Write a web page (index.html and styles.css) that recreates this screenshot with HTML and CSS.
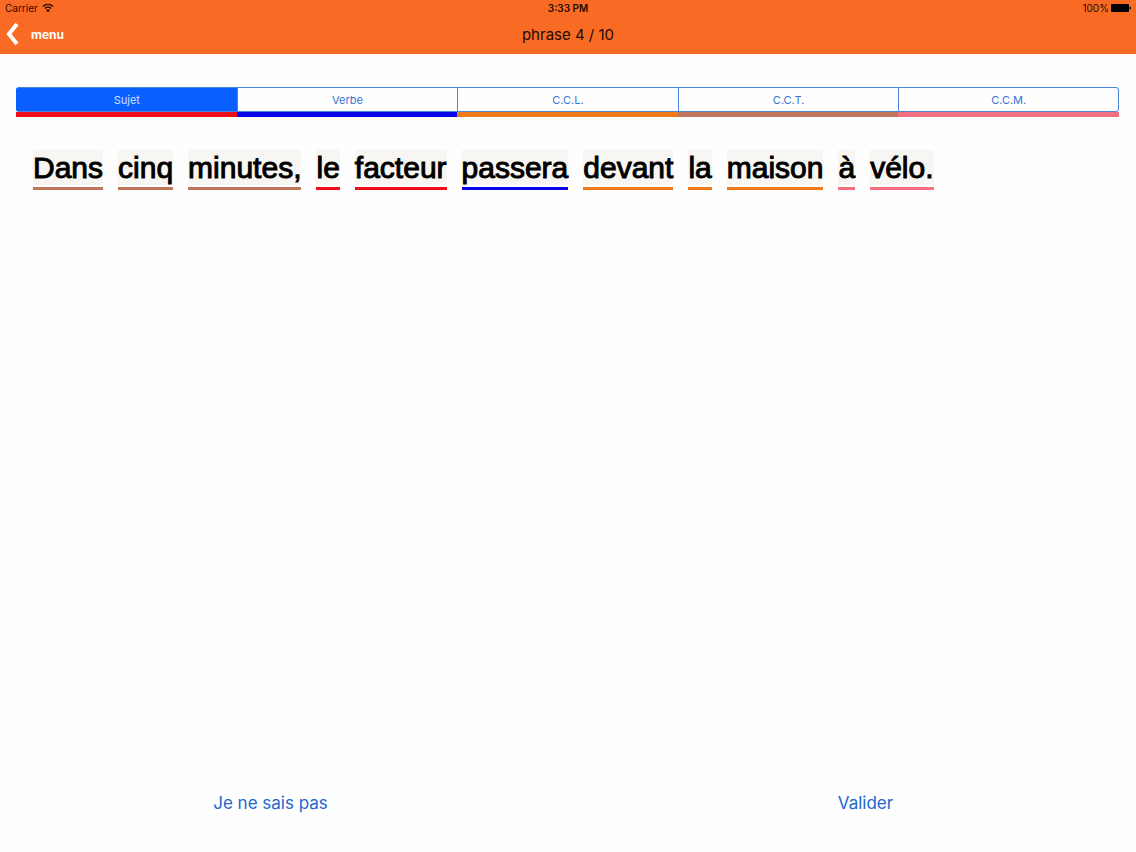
FILE: index.html
```
<!DOCTYPE html>
<html lang="fr">

<head>
    <meta charset="UTF-8">
    <meta name="viewport" content="width=device-width, initial-scale=1">
    <title>phrase 4 / 10</title>
    <link rel="stylesheet" href="styles.css">
</head>

<body>
    <header class="top-bar">
        <div class="status">
            <div class="status-left">
                <span>Carrier</span>
                <svg class="wifi" viewBox="0 0 20 16" aria-hidden="true">
                    <path d="M1.5 5.5a12 12 0 0 1 17 0M4.800 9a7.5 7.5 0 0 1 10.4 0" fill="none" stroke="currentColor" stroke-width="2.4"/>
                    <path d="M6.8 11.6a4.5 4.5 0 0 1 6.4 0L10 15z" fill="currentColor"/>
                </svg>
            </div>
            <div class="status-time">3:33 PM</div>
            <div class="status-right">
                <span>100%</span>
                <svg class="battery" viewBox="0 0 20 8" aria-hidden="true">
                    <rect width="18" height="8" rx="1" fill="currentColor"/>
                    <path d="M18.5 2.5a1.5 1.5 0 0 1 0 3z" fill="currentColor"/>
                </svg>
            </div>
        </div>
        <nav class="nav">
            <a href="#menu" class="back">
                <svg class="chevron" viewBox="0 0 14 24" aria-hidden="true">
                    <path d="M11 2L3 12l8 10" fill="none" stroke="currentColor" stroke-width="4"/>
                </svg>
                menu
            </a>
            <h1 class="title">phrase 4 / 10</h1>
        </nav>
    </header>

    <main class="content">
        <div class="tabs">
            <div class="tab-cell sujet"><button type="button" class="tab active" aria-pressed="true">Sujet</button></div>
            <div class="tab-cell verbe"><button type="button" class="tab" aria-pressed="false">Verbe</button></div>
            <div class="tab-cell ccl"><button type="button" class="tab" aria-pressed="false">C.C.L.</button></div>
            <div class="tab-cell cct"><button type="button" class="tab" aria-pressed="false">C.C.T.</button></div>
            <div class="tab-cell ccm"><button type="button" class="tab" aria-pressed="false">C.C.M.</button></div>
        </div>

        <div class="phrase">
            <button type="button" class="word cct"><span>Dans</span></button>
            <button type="button" class="word cct"><span>cinq</span></button>
            <button type="button" class="word cct"><span>minutes,</span></button>
            <button type="button" class="word sujet"><span>le</span></button>
            <button type="button" class="word sujet"><span>facteur</span></button>
            <button type="button" class="word verbe"><span>passera</span></button>
            <button type="button" class="word ccl"><span>devant</span></button>
            <button type="button" class="word ccl"><span>la</span></button>
            <button type="button" class="word ccl"><span>maison</span></button>
            <button type="button" class="word ccm"><span>à</span></button>
            <button type="button" class="word ccm"><span>vélo.</span></button>
        </div>
    </main>

    <footer class="actions">
        <button type="button" class="action">Je ne sais pas</button>
        <button type="button" class="action">Valider</button>
    </footer>

    <script>
        var tabs = document.querySelectorAll('.tab');
        tabs.forEach(function(tab) {
            tab.addEventListener('click', function() {
                tabs.forEach(function(other) {
                    other.classList.toggle('active', other === tab);
                    other.setAttribute('aria-pressed', other === tab);
                });
            });
        });
    </script>
</body>

</html>
```
FILE: styles.css
```
* {
    box-sizing: border-box;
}

body {
    margin: 0;
    min-height: 100vh;
    display: flex;
    flex-direction: column;
    background-color: #fefefe;
    font-family: Inter, "Liberation Sans", sans-serif;
}

button {
    margin: 0;
    padding: 0;
    border: none;
    background: none;
    font-family: inherit;
    cursor: pointer;
}

/* one colour for each function in the sentence */
.sujet {
    --color: #f10c1c;
}

.verbe {
    --color: #0a06ea;
}

.ccl {
    --color: #ef7a1a;
}

.cct {
    --color: #c0745a;
}

.ccm {
    --color: #f2707f;
}

.top-bar {
    background-color: #f96a25;
    color: #240a02;
}

.status {
    display: grid;
    grid-template-columns: 1fr auto 1fr;
    align-items: center;
    height: 16px;
    padding: 0 5px;
    font-size: 10px;
}

.status-left,
.status-right {
    display: flex;
    align-items: center;
    gap: 4px;
}

.status-right {
    justify-content: flex-end;
    gap: 2px;
}

.status-time {
    font-weight: 600;
}

.wifi {
    width: 12px;
    height: 10px;
}

.battery {
    width: 20px;
    height: 8px;
    color: #000;
}

.nav {
    display: grid;
    grid-template-columns: 1fr auto 1fr;
    align-items: center;
    height: 38px;
    padding: 0 6px 2px;
}

.back {
    display: flex;
    align-items: center;
    gap: 11px;
    color: #fff;
    font-size: 12px;
    font-weight: 700;
    text-decoration: none;
}

.chevron {
    width: 14px;
    height: 24px;
}

.title {
    margin: 0;
    font-size: 15px;
    font-weight: 400;
}

.content {
    flex: 1;
    padding: 33px 17px 0 16px;
}

.tabs {
    display: flex;
}

.tab-cell {
    flex: 1;
    border-bottom: 5px solid var(--color);
}

.tab {
    display: block;
    width: 100%;
    height: 25px;
    border: 1px solid #4a83dc;
    border-right: none;
    color: #3673d3;
    font-size: 11px;
}

.tab-cell:first-child .tab {
    border-radius: 3px 0 0 3px;
}

.tab-cell:last-child .tab {
    border-right: 1px solid #4a83dc;
    border-radius: 0 3px 3px 0;
}

.tab.active {
    background-color: #0a5fff;
    border-left-color: #0a5fff;
    color: #cfe0ff;
}

.phrase {
    display: flex;
    flex-wrap: wrap;
    gap: 15px;
    padding: 33px 17px 0;
}

.word {
    padding-bottom: 2px;
    border-bottom: 3px solid var(--color);
    color: #000;
    font-family: "Liberation Sans", Arial, sans-serif;
    font-size: 30px;
    line-height: 35px;
    -webkit-text-stroke: 1px #000;
}

.word span {
    display: block;
    background-color: #f7f6f2;
}

.actions {
    display: grid;
    grid-template-columns: 1fr 1fr;
    gap: 54px;
    padding-bottom: 38px;
}

.action {
    justify-self: center;
    color: #2067cf;
    font-size: 17px;
    line-height: 22px;
}
```
